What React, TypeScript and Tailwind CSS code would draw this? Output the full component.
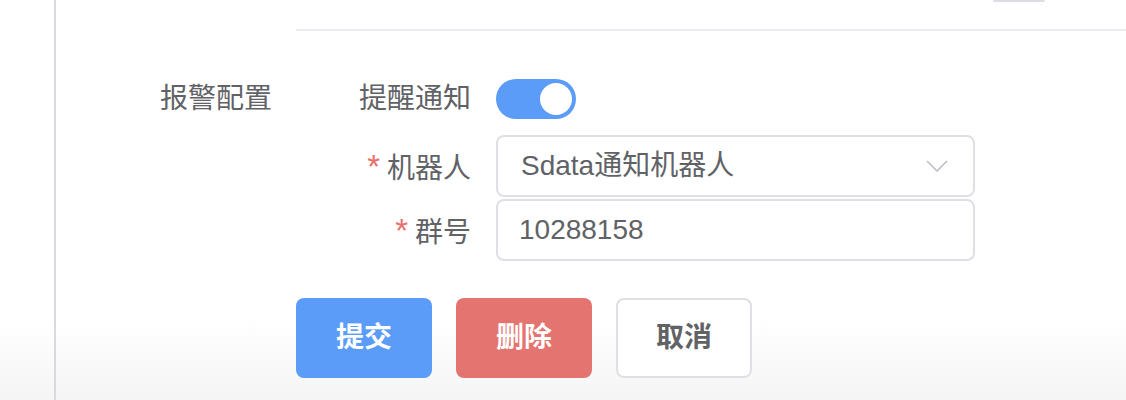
import React from "react";

const font = { fontFamily: '"Liberation Sans", "Noto Sans CJK SC", sans-serif' };

function Label({ children, required }: { children: React.ReactNode; required?: boolean }) {
  return (
    <div className="w-[175px] shrink-0 text-right text-[28px] leading-none text-[#606266]">
      {required && <span className="mr-[7px] text-[33px] leading-none text-[#e8716c]">*</span>}
      {children}
    </div>
  );
}

export default function App() {
  return (
    <div
      className="flex h-[400px] w-[1126px] overflow-hidden bg-gradient-to-b from-white from-[80%] to-[#f5f5f6]"
      style={font}
    >
      <div className="w-[54px] shrink-0" />
      <div className="w-[2px] shrink-0 bg-[#d9d9de]" />
      <div className="flex flex-1 flex-col">
        <div className="flex h-[29px] items-start">
          <div className="ml-[937px] h-[2px] w-[52px] rounded-b bg-[#dcdce2]" />
        </div>
        <div className="ml-[240px] h-[2px] bg-[#ebebf0]" />
        <div className="flex pt-[48px]">
          <div className="flex h-[40px] w-[240px] shrink-0 items-center pl-[104px] text-[28px] leading-none text-[#606266]">
            报警配置
          </div>
          <div className="flex flex-col">
            <div className="flex h-[40px] items-center gap-[25px]">
              <Label>提醒通知</Label>
              <div className="flex h-[40px] w-[80px] items-center justify-end rounded-full bg-[#5a9cf8] pr-[4px]">
                <div className="h-[32px] w-[32px] rounded-full bg-white" />
              </div>
            </div>
            <div className="mt-[16px] flex h-[62px] items-center gap-[25px]">
              <Label required>机器人</Label>
              <div className="flex h-[62px] w-[479px] items-center justify-between rounded-[8px] border-2 border-[#dfe0e6] bg-white pl-[23px] pr-[25px] text-[28px] text-[#606266]">
                <span>Sdata通知机器人</span>
                <svg width="22" height="12" viewBox="0 0 22 12" fill="none">
                  <path d="M1 1 L11 11 L21 1" stroke="#b9bcc4" strokeWidth="1.5" />
                </svg>
              </div>
            </div>
            <div className="mt-[2px] flex h-[62px] items-center gap-[25px]">
              <Label required>群号</Label>
              <div className="flex h-[62px] w-[479px] items-center rounded-[8px] border-2 border-[#dfe0e6] bg-white pl-[21px] text-[28px] text-[#606266]">
                10288158
              </div>
            </div>
            <div className="mt-[37px] flex gap-[24px]">
              <button className="flex h-[80px] w-[136px] items-center justify-center rounded-[8px] bg-[#5a9cf8] text-[28px] font-bold text-white">
                提交
              </button>
              <button className="flex h-[80px] w-[136px] items-center justify-center rounded-[8px] bg-[#e4746f] text-[28px] font-bold text-white">
                删除
              </button>
              <button className="flex h-[80px] w-[136px] items-center justify-center rounded-[8px] border-2 border-[#dfe0e6] bg-white text-[28px] font-bold text-[#606266]">
                取消
              </button>
            </div>
          </div>
        </div>
      </div>
    </div>
  );
}
